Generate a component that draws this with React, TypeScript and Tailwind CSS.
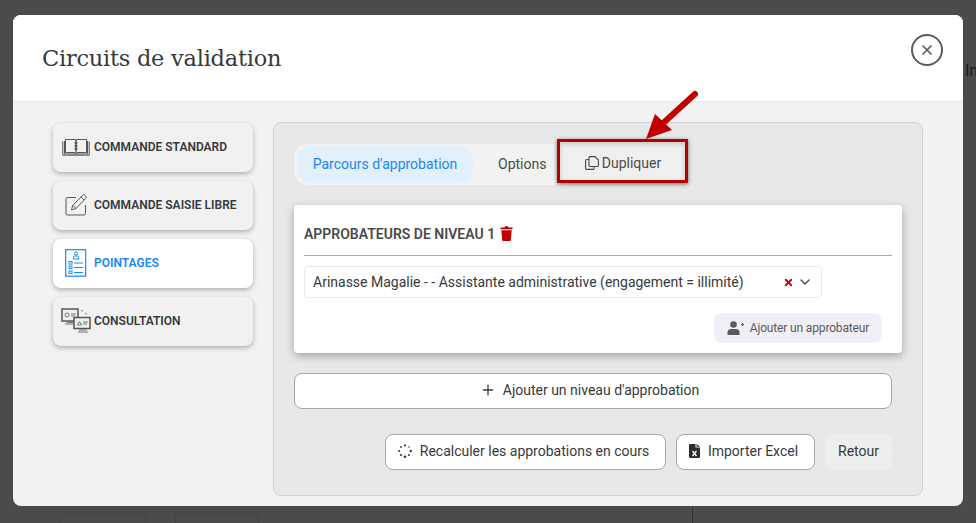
import { Plus, X, ChevronDown } from 'lucide-react';

const NAV = [
  { label: 'COMMANDE STANDARD', icon: 'book' },
  { label: 'COMMANDE SAISIE LIBRE', icon: 'edit' },
  { label: 'POINTAGES', icon: 'list', active: true },
  { label: 'CONSULTATION', icon: 'screens' },
];

const DOTS = [
  [7, 1.500, 1.100],
  [11, 3, 0.800],
  [12.800, 7, 1.200],
  [11, 11, 1],
  [7, 12.700, 1.300],
  [3, 11, 1.100],
  [1.200, 7, 1],
  [3, 3, 0.900],
];

function NavIcon({ name }: { name: string }) {
  if (name === 'book') {
    return (
      <svg width="28" height="18" viewBox="0 0 28 18" fill="none" stroke="#555" strokeWidth="1" className="shrink-0">
        <path d="M3.500 1.500h9.500l1 1 1-1h9.500v13H15l-1 1-1-1H3.500z" />
        <path d="M2.500 3v13h23V3" />
        <path d="M0.800 3.500v13.700h26.400V3.500" />
        <path d="M14 1v15" strokeWidth="1.200" />
        <circle cx="14" cy="5" r="1.100" fill="#555" />
        <circle cx="14" cy="8" r="1.100" fill="#555" />
        <circle cx="14" cy="11" r="1.100" fill="#555" />
      </svg>
    );
  }
  if (name === 'edit') {
    return (
      <svg width="22" height="22" viewBox="0 0 22 22" fill="none" stroke="#555" strokeWidth="1" className="shrink-0">
        <path d="M11 3.500H2.500Q1 3.500 1 5v15q0 1 1.500 1H19q1.500 0 1.500-1.500V11" />
        <path d="M6.500 16l1.200-4.500L17.500 1.500a1.500 1.500 0 0 1 2.500 0l.6.7a1.500 1.500 0 0 1 0 2.300L11 14.500z" />
        <path d="M8 11.500l3 3M16 3l3 3" />
      </svg>
    );
  }
  if (name === 'list') {
    return (
      <svg width="22" height="28" viewBox="0 0 22 28" fill="none" stroke="#1a86fb" strokeWidth="1" className="shrink-0">
        <rect x="0.700" y="0.700" width="20" height="26.500" strokeWidth="1.200" />
        <circle cx="11" cy="4.500" r="1.500" />
        <path d="M8.500 10V8.500q0-1.500 1-1.500h3q1 0 1 1.500V10z" />
        <rect x="4" y="12.500" width="3" height="2.600" />
        <rect x="4" y="17" width="3" height="2.600" />
        <rect x="4" y="22" width="3" height="2.600" />
        <path d="M9 14h9M9 18.500h9M9 23.500h9" />
      </svg>
    );
  }
  return (
    <svg width="31" height="25" viewBox="0 0 31 25" fill="none" stroke="#555" className="shrink-0">
      <rect x="1" y="1" width="16" height="12" strokeWidth="1.500" fill="#efefef" />
      <circle cx="6" cy="7" r="2" strokeWidth="0.800" />
      <path d="M10 6h5M10 8h4M6 14.500h6M4 16h10" strokeWidth="0.800" />
      <rect x="13" y="9.500" width="16" height="11" strokeWidth="1.500" fill="#efefef" />
      <path d="M16.500 17l1.500-3h1l1.500 3zM22 14h5M22 16h4M18 22h8M17 24h10" strokeWidth="0.800" />
      <path d="M20 2l2 1.500M24 5l2 1.500" strokeWidth="0.800" />
    </svg>
  );
}

export default function App() {
  return (
    <div className="relative h-[523px] w-[976px] overflow-hidden bg-[#4b4b4b] pl-[13px] pt-[15px] font-['Roboto',sans-serif]">
      {/* page behind the backdrop */}
      <span className="absolute left-[965px] top-[59px] text-base text-[#1c1c1c]">In</span>
      <div className="absolute left-[60px] top-[513px] h-[20px] w-[86px] rounded border border-[#444]" />
      <div className="absolute left-[175px] top-[513px] h-[20px] w-[84px] rounded border border-[#444]" />
      <div className="absolute left-[692px] top-[506px] h-[17px] w-px bg-[#333]" />

      <div className="relative h-[491px] w-[950px] overflow-hidden rounded-lg bg-[#f2f2f2]">
        <header className="flex h-[87px] items-center justify-between border-b border-[#e8e8e8] bg-white pl-[29px] pr-[20px]">
          <h1 className="font-['DejaVu_Serif',serif] text-[22.500px] leading-none tracking-[-0.25px] text-[#37393d]">Circuits de validation</h1>
          <button type="button" className="-mt-[16px] flex h-8 w-8 items-center justify-center rounded-full border-2 border-[#5b5b5b] text-[#5b5b5b]">
            <X className="h-4 w-4" strokeWidth={2.500} />
          </button>
        </header>

        <div className="flex gap-[20px] pl-[40px] pt-[20px]">
          <nav className="flex w-[200px] flex-col gap-[9px] pt-px">
            {NAV.map(({ label, icon, active }) => (
              <div
                key={label}
                className={`flex h-[49px] items-center rounded-lg pb-[2px] shadow-[0_2px_5px_rgba(0,0,0,0.28)] ${active ? 'bg-white text-[#1a86fb]' : 'bg-[#f1f1f1] text-[#37393d]'}`}
              >
                <span className="flex w-[41px] shrink-0 justify-center pl-[5px]">
                  <NavIcon name={icon} />
                </span>
                <span className="whitespace-nowrap text-xs font-semibold">{label}</span>
              </div>
            ))}
          </nav>

          <section className="h-[374px] w-[650px] rounded-lg border border-[#d2d2d2] bg-[#e8e8e8] pl-[20px] pt-[21px]">
            <div className="flex h-[41px] w-[280px] items-center rounded-[14px] bg-[#f2f2f2] px-[3px] text-sm">
              <span className="flex h-[37px] w-[176px] items-center justify-center rounded-[14px] bg-[#e2f0fc] pb-[2px] text-[#1a86fb]">Parcours d'approbation</span>
              <span className="ml-[25px] pb-[2px] text-[#4a4a4a]">Options</span>
            </div>

            <div className="mt-[20px] h-[148px] w-[608px] rounded bg-white px-[10px] pt-[19px] shadow-[0_3px_8px_rgba(0,0,0,0.3)]">
              <div className="flex h-[19px] items-center gap-[5px] text-sm font-semibold text-[#4a4a4a]">
                APPROBATEURS DE NIVEAU 1
                <svg width="13" height="15" viewBox="0 0 13 15" className="shrink-0">
                  <path d="M0.500 1.500H4.500L5 .3H8L8.500 1.500H12.500V3.300H0.500z" fill="#c00000" />
                  <path d="M1.300 4.200H11.700L10.800 14Q10.700 15 9.700 15H3.300Q2.300 15 2.200 14z" fill="#c00000" />
                </svg>
              </div>
              <div className="mt-[12px] border-t border-[#a8a8a8]" />
              <div className="mt-[10px] flex h-[32px] w-[518px] items-center justify-between rounded border border-[#e8e8e8] pl-[8px] pr-[8px] text-sm text-[#37393d]">
                <span className="whitespace-nowrap">Arinasse Magalie - - Assistante administrative (engagement = illimité)</span>
                <span className="flex items-center gap-[3px]">
                  <X className="h-[11px] w-[11px] text-[#c00000]" strokeWidth={4} />
                  <ChevronDown className="h-4 w-4 text-[#4a4a4a]" />
                </span>
              </div>
              <div className="mt-[15px] flex justify-end pr-[10px]">
                <button type="button" className="flex h-[30px] w-[168px] items-center justify-center gap-[6px] rounded-lg bg-[#f0eff5] pb-px text-xs tracking-[-0.15px] text-[#5b5b5b]">
                  <svg width="17" height="14" viewBox="0 0 17 14" fill="#5b5b5b" className="shrink-0">
                    <circle cx="6.500" cy="3.500" r="3.300" />
                    <path d="M0.500 14V11.500Q0.500 8 4 8H9Q12.500 8 12.500 11.500V14z" />
                    <path d="M14 3.500h3M15.500 2v3" stroke="#5b5b5b" strokeWidth="1" />
                  </svg>
                  Ajouter un approbateur
                </button>
              </div>
            </div>

            <button type="button" className="mt-[20px] flex h-[36px] w-[598px] items-center justify-center gap-[7px] rounded-lg border border-[#a8a8a8] bg-white pb-[2px] pr-[7px] text-sm text-[#37393d]">
              <Plus className="h-4 w-4" />
              Ajouter un niveau d'approbation
            </button>

            <div className="mt-[25px] flex w-[598px] justify-end gap-[10px] text-sm text-[#37393d]">
              <button type="button" className="flex h-[36px] w-[281px] items-center justify-center gap-[8px] rounded-lg border border-[#a8a8a8] bg-white pb-[2px] pr-[4px]">
                <svg width="14" height="14" viewBox="0 0 14 14" fill="#37393d" className="shrink-0">
                  {DOTS.map(([cx, cy, r]) => (
                    <circle key={`${cx}-${cy}`} cx={cx} cy={cy} r={r} />
                  ))}
                </svg>
                Recalculer les approbations en cours
              </button>
              <button type="button" className="flex h-[36px] w-[139px] items-center justify-center gap-[8px] rounded-lg border border-[#a8a8a8] bg-white pb-[2px] pr-[4px]">
                <svg width="11" height="14" viewBox="0 0 11 14" className="shrink-0">
                  <path d="M0 1.200Q0 0 1.200 0H6.500V3.500H11V12.800Q11 14 9.800 14H1.200Q0 14 0 12.800z" fill="#2c2c2c" />
                  <path d="M7.500 0L11 2.700H7.500z" fill="#2c2c2c" />
                  <path d="M3.500 7l4 5M7.500 7l-4 5" stroke="#fff" strokeWidth="1.300" />
                </svg>
                Importer Excel
              </button>
              <button type="button" className="flex h-[36px] w-[67px] items-center justify-center rounded-lg bg-[#eeeeee] pb-[2px]">Retour</button>
            </div>
          </section>
        </div>
      </div>

      {/* annotation over the screenshot */}
      <div className="absolute left-[557px] top-[139px] flex h-[44px] w-[131px] items-center justify-center gap-[3px] border-[3px] border-[#b30000] bg-[#efefef] pl-px pt-[4px] text-sm text-[#4a4a4a] shadow-[0_1px_4px_rgba(0,0,0,0.55),inset_0_2px_5px_rgba(0,0,0,0.18)]">
        <svg width="14" height="14" viewBox="0 0 14 14" fill="none" stroke="#4a4a4a" strokeWidth="1.100" className="shrink-0">
          <path d="M5 .6H10L13.400 4V9.500Q13.400 10.500 12.400 10.500H5Q4 10.500 4 9.500V1.600Q4 .6 5 .6z" />
          <path d="M4 3.500H1.600Q.6 3.500 .6 4.500V12.400Q.6 13.400 1.600 13.400H8Q9 13.400 9 12.400V10.500" />
        </svg>
        Dupliquer
      </div>
      <svg width="60" height="56" viewBox="0 0 60 56" className="absolute left-[642px] top-[88px]">
        <path d="M53 6L18 38" stroke="#c00000" strokeWidth="6" strokeLinecap="round" />
        <path d="M4 51L13 26L30 42z" fill="#c00000" />
      </svg>
    </div>
  );
}
